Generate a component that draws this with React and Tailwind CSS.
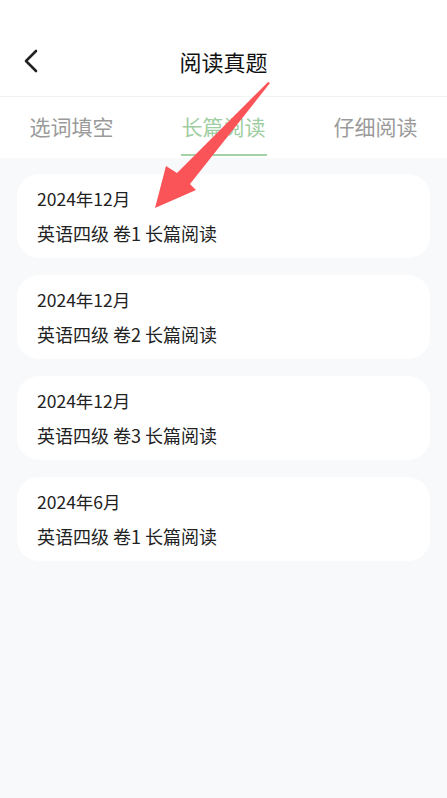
import React from 'react';

const papers = [
  { date: '2024年12月', title: '英语四级 卷1 长篇阅读' },
  { date: '2024年12月', title: '英语四级 卷2 长篇阅读' },
  { date: '2024年12月', title: '英语四级 卷3 长篇阅读' },
  { date: '2024年6月', title: '英语四级 卷1 长篇阅读' },
];

const tabs = ['选词填空', '长篇阅读', '仔细阅读'];

function BackIcon() {
  return (
    <svg width="20" height="24" viewBox="0 0 20 24" fill="none">
      <path d="M14 2 L4 12 L14 22" stroke="#222" strokeWidth="2.6" strokeLinecap="round" strokeLinejoin="round" />
    </svg>
  );
}

export default function App() {
  return (
    <div
      className="relative min-h-[798px] w-[447px] overflow-hidden bg-[#f8f9fb]"
      style={{ fontFamily: '"Noto Sans CJK SC", "Noto Sans", sans-serif' }}
    >
      <header className="relative flex h-[97px] items-end justify-center border-b border-[#f1f2f4] bg-white pb-[20px]">
        <button className="absolute left-[22px] top-[49px]">
          <BackIcon />
        </button>
        <h1 className="text-[22px] leading-[30px] text-[#111]">阅读真题</h1>
      </header>

      <nav className="flex h-[61px] justify-center bg-white">
        {tabs.map((tab, i) => (
          <div key={tab} className="flex w-[152px] shrink-0 flex-col items-center">
            <span
              className={
                'mt-[14px] text-[21px] leading-[30px] ' +
                (i === 1 ? 'text-[#9fcea2]' : 'text-[#9a9a9a]')
              }
            >
              {tab}
            </span>
            {i === 1 && <span className="mt-[13px] h-[2px] w-[86px] bg-[#a3d3a6]" />}
          </div>
        ))}
      </nav>

      <main className="flex flex-col gap-[17px] px-[17px] pt-[16px]">
        {papers.map((p, i) => (
          <div key={i} className="flex h-[84px] flex-col justify-center gap-[11px] rounded-[22px] bg-white px-[20px]">
            <div className="text-[17.5px] leading-[22px] text-[#222]">{p.date}</div>
            <div className="text-[18px] leading-[24px] text-[#222]">{p.title}</div>
          </div>
        ))}
      </main>

      <svg className="pointer-events-none absolute left-0 top-0" width="447" height="798">
        <polygon
          points="270,83 190,184 196,190 155,208 166,166 177,173 268,82"
          fill="#fb5458"
        />
      </svg>
    </div>
  );
}
